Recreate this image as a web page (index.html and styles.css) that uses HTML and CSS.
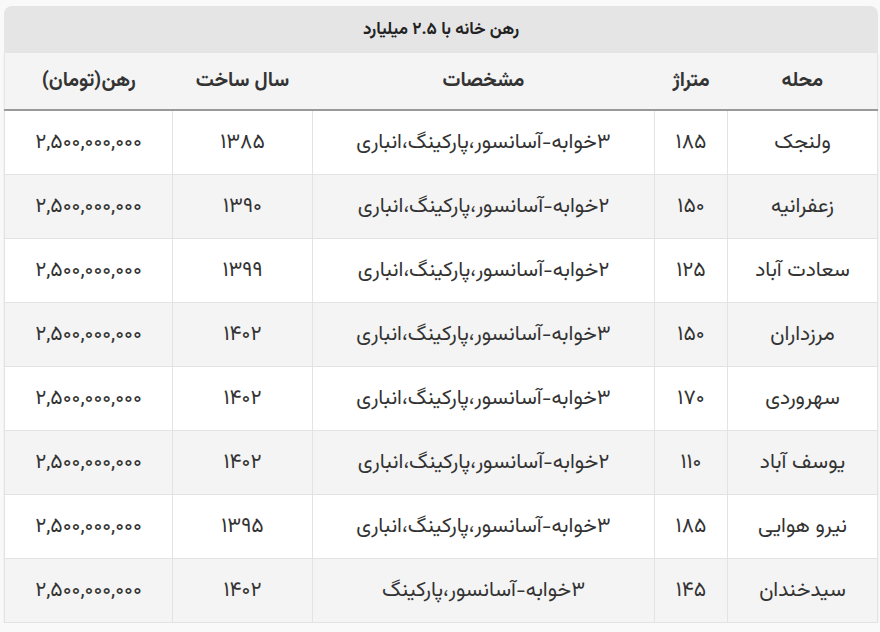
FILE: index.html
```html
<!DOCTYPE html>
<html lang="fa" dir="rtl">
<head>
<meta charset="utf-8">
<link rel="stylesheet" href="styles.css">
</head>
<body>
<div class="wrap">
  <div class="title">رهن خانه با ۲.۵ میلیارد</div>
  <table class="tbl">
    <colgroup>
      <col class="c1"><col class="c2"><col class="c3"><col class="c4"><col class="c5">
    </colgroup>
    <thead>
      <tr><th>محله</th><th>متراژ</th><th>مشخصات</th><th>سال ساخت</th><th>رهن(تومان)</th></tr>
    </thead>
    <tbody>
      <tr><td>ولنجک</td><td>۱۸۵</td><td>۳خوابه-آسانسور،پارکینگ،انباری</td><td>۱۳۸۵</td><td class="num">۲,۵۰۰,۰۰۰,۰۰۰</td></tr>
      <tr><td>زعفرانیه</td><td>۱۵۰</td><td>۲خوابه-آسانسور،پارکینگ،انباری</td><td>۱۳۹۰</td><td class="num">۲,۵۰۰,۰۰۰,۰۰۰</td></tr>
      <tr><td>سعادت آباد</td><td>۱۲۵</td><td>۲خوابه-آسانسور،پارکینگ،انباری</td><td>۱۳۹۹</td><td class="num">۲,۵۰۰,۰۰۰,۰۰۰</td></tr>
      <tr><td>مرزداران</td><td>۱۵۰</td><td>۳خوابه-آسانسور،پارکینگ،انباری</td><td>۱۴۰۲</td><td class="num">۲,۵۰۰,۰۰۰,۰۰۰</td></tr>
      <tr><td>سهروردی</td><td>۱۷۰</td><td>۳خوابه-آسانسور،پارکینگ،انباری</td><td>۱۴۰۲</td><td class="num">۲,۵۰۰,۰۰۰,۰۰۰</td></tr>
      <tr><td>یوسف آباد</td><td>۱۱۰</td><td>۲خوابه-آسانسور،پارکینگ،انباری</td><td>۱۴۰۲</td><td class="num">۲,۵۰۰,۰۰۰,۰۰۰</td></tr>
      <tr><td>نیرو هوایی</td><td>۱۸۵</td><td>۳خوابه-آسانسور،پارکینگ،انباری</td><td>۱۳۹۵</td><td class="num">۲,۵۰۰,۰۰۰,۰۰۰</td></tr>
      <tr><td>سیدخندان</td><td>۱۴۵</td><td>۳خوابه-آسانسور،پارکینگ</td><td>۱۴۰۲</td><td class="num">۲,۵۰۰,۰۰۰,۰۰۰</td></tr>
    </tbody>
  </table>
</div>
</body>
</html>
```

FILE: styles.css
```css
html, body {
  margin: 0;
  padding: 0;
  background: #f9f9f9;
}
body {
  font-family: "Vazirmatn", "Noto Sans Arabic", "DejaVu Sans", sans-serif;
  color: #333;
}
.wrap {
  width: 874px;
  margin: 6px 2px 0 4px;
}
.title {
  height: 47px;
  background: #e5e5e5;
  border-radius: 8px 8px 0 0;
  font-size: 17px;
  font-weight: bold;
  display: flex;
  align-items: center;
  justify-content: center;
  color: #222;
}
.tbl {
  width: 873px;
  border-collapse: collapse;
  table-layout: fixed;
  background: #fff;
  box-shadow: 0 1px 2px rgba(0,0,0,0.08);
  border-left: 1px solid #e6e6e6;
  border-right: 1px solid #e6e6e6;
}
.c1 { width: 150px; }
.c2 { width: 73px; }
.c3 { width: 342px; }
.c4 { width: 140px; }
.c5 { width: 168px; }
thead th {
  height: 56px;
  background: #f4f4f4;
  font-size: 20px;
  font-weight: bold;
  color: #333;
  border-bottom: 2px solid #999;
  padding: 0;
}
tbody td {
  height: 63px;
  padding: 0;
  text-align: center;
  font-size: 21px;
  color: #333;
  border: 1px solid #e3e3e3;
}
tbody td.num {
  font-size: 21px;
  letter-spacing: 0.5px;
}
tbody tr:first-child td { border-top: none; }
tbody tr:nth-child(even) td { background: #f4f4f4; }
tbody tr:nth-child(odd) td { background: #fff; }
```
